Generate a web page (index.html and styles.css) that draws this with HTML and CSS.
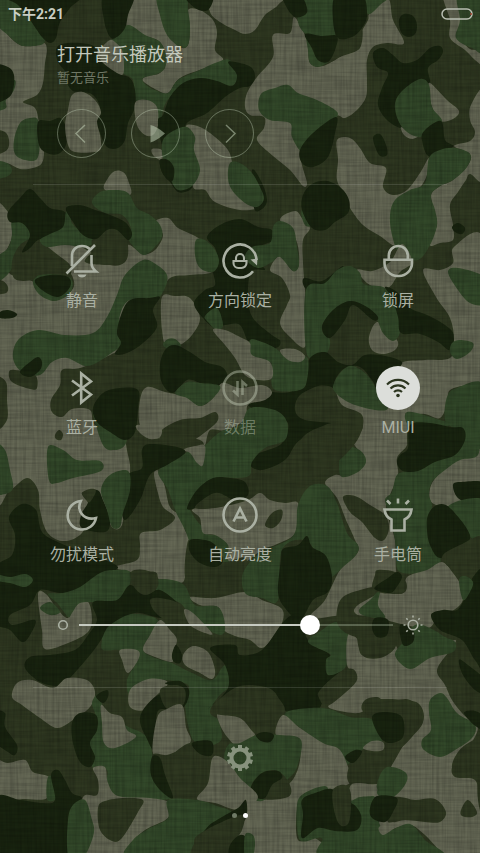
FILE: index.html
```
<!DOCTYPE html>
<html lang="zh-CN">
<head>
    <meta charset="UTF-8">
    <meta name="viewport" content="width=device-width, initial-scale=1.0">
    <title>控制中心</title>
    <link rel="stylesheet" href="styles.css">
</head>
<body>

<!-- Camouflage wallpaper, blobs are added by camo.js -->
<svg class="wallpaper" viewBox="0 0 480 853" preserveAspectRatio="xMidYMid slice" aria-hidden="true">
    <defs>
        <filter id="warp" x="0" y="0" width="100%" height="100%">
            <feTurbulence type="fractalNoise" baseFrequency="0.4 0.025" numOctaves="2" seed="3"/>
            <feColorMatrix values="0 0 0 0 0  0 0 0 0 0  0 0 0 0 0  0.3 0 0 0 -0.1"/>
        </filter>
        <filter id="weft" x="0" y="0" width="100%" height="100%">
            <feTurbulence type="fractalNoise" baseFrequency="0.025 0.4" numOctaves="2" seed="8"/>
            <feColorMatrix values="0 0 0 0 0  0 0 0 0 0  0 0 0 0 0  0.3 0 0 0 -0.1"/>
        </filter>
    </defs>
    <rect class="camo-o" width="480" height="853"/>
    <g id="camo"></g>
    <!-- Linen weave -->
    <rect width="480" height="853" filter="url(#warp)"/>
    <rect width="480" height="853" filter="url(#weft)"/>
</svg>

<header class="status-bar">
    <span class="time">下午2:21</span>
    <svg class="battery" width="32" height="12" viewBox="0 0 32 12" aria-label="电量">
        <rect x="1" y="1" width="30" height="10" rx="5"/>
        <path d="M30 5v2" class="battery-low"/>
    </svg>
</header>

<main class="panel">
    <section class="music">
        <h1>打开音乐播放器</h1>
        <p>暂无音乐</p>
        <div class="player">
            <button aria-label="上一首"><svg viewBox="0 0 49 49"><path d="M28 16l-9 8.500 9 9"/></svg></button>
            <button aria-label="播放"><svg viewBox="0 0 49 49"><path class="solid" d="M19.500 16q6 1 14.500 8.500q-8 7-14.500 9z"/></svg></button>
            <button aria-label="下一首"><svg viewBox="0 0 49 49"><path d="M21 16l9 8.500-9 9"/></svg></button>
        </div>
    </section>

    <section class="toggles">
        <button class="toggle">
            <svg viewBox="0 0 44 44">
                <path d="M12 27V17C12 11 16 7 22 7C25 7 27.500 8 29.500 9.800M31.500 16V24C31.500 27 33 30 36 32.500H14M6.500 34.500L35 6"/>
                <path class="solid" d="M17.500 35.500h9q-1 3-4.500 3t-4.500-3z"/>
            </svg>
            <span>静音</span>
        </button>
        <button class="toggle">
            <svg viewBox="0 0 44 44">
                <path d="M35 32.200A16.500 16.500 0 1 1 38.500 21"/>
                <path class="solid" d="M32.500 20.500l7-1-.5 7z"/>
                <path class="thin" d="M18 22v-3a4 4 0 0 1 8 0v3M15.500 22h13v2a5 5 0 0 1-5 5h-3a5 5 0 0 1-5-5z"/>
            </svg>
            <span>方向锁定</span>
        </button>
        <button class="toggle">
            <svg viewBox="0 0 44 44"><path d="M12.800 20.500V16.500a9.500 9.500 0 0 1 19 0V20.500M8.500 20.800H36V24a13 13 0 0 1-13 13h-1.500a13 13 0 0 1-13-13z"/></svg>
            <span>锁屏</span>
        </button>

        <button class="toggle">
            <svg viewBox="0 0 44 44"><path d="M12 14.500L31 28.500L21.200 36.500V7.500L31 15.500L12 29.500"/></svg>
            <span>蓝牙</span>
        </button>
        <button class="toggle off">
            <svg viewBox="0 0 44 44">
                <circle cx="22" cy="22" r="16.500"/>
                <path d="M19.500 15V28.500l-4.500-4M24.500 29V16l4.500 4"/>
            </svg>
            <span>数据</span>
        </button>
        <button class="toggle on" aria-pressed="true">
            <svg viewBox="0 0 44 44">
                <path class="thin" d="M11 18.500a15.500 15.500 0 0 1 22 0M14.500 22.500a10.600 10.600 0 0 1 15 0M18 26a5.700 5.700 0 0 1 8 0"/>
                <circle class="solid" cx="22" cy="29.500" r="1.800"/>
            </svg>
            <span>MIUI</span>
        </button>

        <button class="toggle">
            <svg viewBox="0 0 44 44"><path d="M20.800 8A14.300 14.300 0 1 0 36 25C24 28 16 18 20.800 8z"/></svg>
            <span>勿扰模式</span>
        </button>
        <button class="toggle">
            <svg viewBox="0 0 44 44">
                <circle cx="22" cy="22" r="16.500"/>
                <path d="M15.500 28.500L22 15.500L28.500 28.500M18 24.500h8"/>
            </svg>
            <span>自动亮度</span>
        </button>
        <button class="toggle">
            <svg viewBox="0 0 44 44">
                <path d="M8.500 16.500H35.500Q34.500 24 28.500 26.500V37.500H15.500V26.500Q9.500 24 8.500 16.500z"/>
                <path d="M22 5.500v5M11 7.500l3.500 3.500M33 7.500l-3.500 3.500"/>
            </svg>
            <span>手电筒</span>
        </button>
    </section>

    <section class="brightness">
        <svg width="12" height="12" viewBox="0 0 12 12"><circle cx="6" cy="6" r="4.300"/></svg>
        <input type="range" min="0" max="100" value="75" aria-label="亮度">
        <svg width="20" height="20" viewBox="0 0 20 20">
            <circle cx="10" cy="10" r="4.800"/>
            <path d="M10 .5v2M10 17.500v2M.5 10h2M17.500 10h2M3.300 3.300l1.400 1.400M15.300 15.300l1.400 1.400M3.300 16.700l1.400-1.400M15.300 4.700l1.400-1.400"/>
        </svg>
    </section>

    <footer class="footer">
        <button class="settings" aria-label="设置">
            <svg width="28" height="28" viewBox="-14 -14 28 28">
                <circle r="8.500"/>
                <path id="teeth" d=""/>
            </svg>
        </button>
        <div class="pages"><i></i><i class="current"></i></div>
    </footer>
</main>

<script src="camo.js"></script>
</body>
</html>
```

FILE: styles.css
```
* {
    box-sizing: border-box;
}

body {
    margin: 0;
    min-height: 100vh;
    position: relative;
    overflow-x: hidden;
    background: #2b331d;
    color: #aab0a3;
    font-family: Roboto, "Noto Sans CJK SC", sans-serif;
}

button {
    padding: 0;
    border: 0;
    background: none;
    color: inherit;
    font: inherit;
    cursor: pointer;
}

svg {
    display: block;
    fill: none;
    stroke: currentColor;
}

.solid {
    fill: currentColor;
    stroke: none;
}

/* Wallpaper */
.wallpaper {
    position: absolute;
    inset: 0;
    width: 100%;
    height: 100%;
    z-index: -1;
    stroke: none;
}

.camo-o { fill: #2e3720; }
.camo-t { fill: #646754; }
.camo-g { fill: #324829; }
.camo-d { fill: #18230f; }

/* Status bar */
.status-bar {
    display: flex;
    justify-content: space-between;
    align-items: center;
    height: 27px;
    padding: 0 7px 0 8px;
}

.time {
    font-size: 14px;
    line-height: 20px;
    font-weight: bold;
    color: #c9cec3;
}

.battery {
    color: #b9beb2;
    stroke-width: 1.5;
}

.battery-low {
    stroke: #a5402c;
}

/* Music */
.music {
    margin: 0 33px;
    padding: 15px 24px 26px;
    border-bottom: 1px solid rgba(255, 255, 255, 0.12);
}

.music h1 {
    margin: 0;
    font-size: 18px;
    line-height: 26px;
    font-weight: normal;
    color: #c3c8bc;
}

.music p {
    margin: 0;
    font-size: 13px;
    line-height: 20px;
    color: #6f7765;
}

.player {
    display: flex;
    gap: 25px;
    margin-top: 21px;
}

.player button {
    width: 49px;
    height: 49px;
    border: 1px solid rgba(200, 215, 190, 0.4);
    border-radius: 50%;
    color: rgba(200, 215, 190, 0.5);
}

.player svg {
    width: 49px;
    margin: -1px;
    stroke-width: 1.5;
}

/* Toggles */
.toggles {
    display: grid;
    grid-template-columns: repeat(3, 1fr);
    row-gap: 53px;
    padding: 54px 3px 0;
}

.toggle {
    display: flex;
    flex-direction: column;
    align-items: center;
    gap: 6px;
    font-size: 16px;
    line-height: 24px;
}

.toggle svg {
    width: 44px;
    height: 44px;
    stroke-width: 2.6;
}

.toggle .thin {
    stroke-width: 2.1;
}

.toggle.off {
    color: rgba(190, 200, 180, 0.45);
}

.toggle.on svg {
    border-radius: 50%;
    background: #dcdeda;
    color: #2c351f;
}

/* Brightness slider */
.brightness {
    display: flex;
    align-items: center;
    gap: 10px;
    margin: 48px 57px 0;
}

.brightness svg {
    flex: none;
    stroke-width: 1.6;
}

.brightness input {
    flex: 1;
    min-width: 0;
    height: 20px;
    margin: 0;
    appearance: none;
    background: linear-gradient(90deg, #c6cac1 75%, rgba(200, 215, 190, 0.3) 75%) center / 100% 2px no-repeat;
}

.brightness input::-webkit-slider-thumb {
    appearance: none;
    width: 20px;
    height: 20px;
    border-radius: 50%;
    background: #fff;
}

/* Footer */
.footer {
    display: flex;
    flex-direction: column;
    align-items: center;
    margin: 52px 33px 0;
    padding: 56px 0 34px;
    border-top: 1px solid rgba(255, 255, 255, 0.12);
}

.settings {
    color: #87927d;
}

.settings svg {
    stroke-width: 4;
}

.pages {
    display: flex;
    gap: 6px;
    margin-top: 41px;
}

.pages i {
    width: 5px;
    height: 5px;
    border-radius: 50%;
    background: #6f7a66;
}

.pages .current {
    background: #fff;
}
```

FILE: camo.js
```
// One blob per line: colour key (t = tan, g = green, d = dark, o = olive), then its outline
const blobs = `
t -5,18 8,35 20,45 33,46 44,43 47,50 45,63 43,83 37,95 23,102 35,108 39,123 41,140 44,150 42,163 33,168 20,169 7,163 -5,163
g -5,3 20,-5 40,8 45,30 44,43 33,46 20,45 8,35 -5,22
d 0,-8 80,-8 70,8 60,22 56,38 50,43 42,37 30,20 18,5
g -5,95 14,80 14,90 6,100 6,108 -5,110
d -5,67 8,67 14,75 13,90 8,98 -5,100
o -5,132 5,132 9,140 7,150 -5,153
g 20,123 30,118 38,120 40,140 37,159 25,160 15,154 14,140
d 38,122 50,121 60,118 66,128 66,145 58,154 47,153 39,145
g -5,162 7,163 12,170 8,176 -5,178
t 132,-5 155,-5 160,13 167,33 180,47 188,45 190,27 188,10 200,10 213,20 217,33 215,50 223,60 205,68 180,78 168,93 157,90 143,81 147,76 160,73 166,60 160,42 145,36 128,28 127,15
g 158,-5 185,-5 188,10 190,27 188,45 180,47 167,35 160,15
g 115,37 128,25 145,35 160,42 166,55 165,68 157,74 143,78 145,84 155,90 168,93 178,80 200,70 215,63 230,60 238,78 236,85 215,85 205,80 185,85 170,97 163,110 160,128 150,105 135,100 133,80 122,72 118,55 107,45
t 103,46 110,40 115,42 122,50 124,65 122,75 110,70 102,62 95,55
d 104,-5 133,-5 128,15 125,28 117,37 110,37 104,20
t 213,-5 280,-5 278,5 265,15 255,30 245,34 235,30 220,22 210,12
d 185,-5 212,-5 208,10 195,8
d 62,44 80,43 95,47 100,60 117,73 130,78 135,90 135,107 128,123 125,140 118,148 107,147 100,133 97,120 100,107 93,95 83,92 73,91 67,83 66,73 58,62 56,50
t 72,95 83,92 95,100 101,112 97,122 100,135 101,148 95,152 75,152 68,145 65,125 68,110
t 135,103 147,100 157,107 158,125 153,135 145,135 137,125
t 152,149 162,150 165,158 160,160 153,155
t 186,126 200,127 215,137 228,150 233,165 240,190 255,200 262,207 240,210 215,202 205,190 193,187 195,160 192,145
d 163,115 170,97 183,83 200,78 217,81 232,86 237,75 228,62 240,63 252,68 255,78 250,86 240,88 225,97 207,113 188,122 182,133 167,150 160,138 158,120
d 160,160 168,160 174,168 178,185 192,186 188,191 178,192 170,182 162,172
g 163,140 175,130 187,127 195,137 194,150 200,170 192,186 178,190 170,178 163,160
d 160,160 168,160 174,168 173,180 168,180 162,172
d 252,170 262,183 267,200 262,209 254,208
g 230,163 240,163 252,173 260,187 264,199 257,207 245,203 232,190 228,178
t 105,190 108,178 115,171 123,172 128,180 130,195
t 294,17 303,31 308,45 310,63 323,66 340,57 357,50 360,35 368,20 370,13 388,-1 393,20 404,43 387,43 373,47 367,60 367,80 366,97 357,110 345,118 335,116 310,130 300,148 302,165 307,183 303,186 290,170 273,156 257,140 264,128 264,117 250,115 245,107 247,93 257,77 273,57 273,35 290,33
g 298,22 300,-5 335,-5 335,35 318,38 307,35
g 307,38 318,60 328,62 318,67 310,63 308,50
d 283,-5 300,-5 307,8 305,15 295,17 287,8
g 362,-5 390,-5 380,5 368,14
o 335,37 352,37 362,28 360,48 345,54 328,62
d 336,-5 362,-5 367,15 362,28 352,37 338,38 333,20
d 305,34 322,36 337,36 335,50 328,62 318,60 312,48
g 261,94 275,88 288,85 298,93 317,100 335,110 337,117 325,130 313,145 302,152 292,137 290,123 270,120 259,110
d 336,117 335,133 328,157 313,167 302,163 300,150 313,133
d 399,20 404,14 413,16 417,25 415,34 408,37 401,32
d 373,53 383,48 393,55 403,63 417,60 430,48 440,46 443,52 438,60 428,68 430,83 420,82 405,92 396,105 398,118 401,128 387,120 378,105 382,88 388,73 377,67
t 430,83 447,100 459,111 453,119 440,121 432,107 429,93
t 401,127 410,132 419,135 412,139 404,135
g 420,79 429,85 432,107 442,121 430,130 420,137 407,132 398,120 395,103 403,90
d 425,130 441,121 445,140 453,147 430,157 422,140
d 373,138 380,134 386,145 387,155 379,155
t 337,140 350,138 360,148 370,163 386,168 383,187 393,195 407,190 420,173 429,158 427,175 418,190 400,205 392,222 395,245 380,236 363,225 350,208 345,195 337,180 338,160
t 443,-5 458,-5 461,20 460,35 470,49 485,50 485,66 475,60 465,50 450,38 450,20
t 485,92 471,105 470,120 475,132 470,141 454,146 470,154 468,165 453,180 440,186 431,195 434,210 437,225 430,245 440,243 453,240 453,225 450,205 458,192 466,180 470,174 485,177
g 458,-5 485,-5 485,50 472,48 456,38 460,20
g 429,158 440,150 455,148 470,154 467,167 453,180 440,186 431,195 435,210 437,225 430,245 418,260 400,255 392,235 390,215 395,200 410,190 425,183
d 452,227 458,223 465,228 462,234 455,232
t -5,205 8,212 12,225 10,243 -5,262
t -5,280 12,275 25,278 38,285 55,300 72,290 73,278 62,262 45,260 38,252 50,245 70,242 90,252 110,265 125,262 128,245 143,254 155,250 163,235 155,222 168,218 178,228 195,236 207,245 216,258 212,272 190,275 170,278 160,295 140,310 125,345 110,355 80,368 62,370 60,385 51,400 52,412 62,417 72,409 90,410 95,425 120,430 128,455 130,472 125,500 122,525 113,528 100,510 80,535 62,541 47,532 40,510 38,490 27,478 10,490 -5,490
g 12,222 24,224 31,233 27,243 17,253 12,268 5,277 -5,282 -5,260 8,248 12,235
o 12,262 20,245 35,238 45,245 58,255 70,265 70,275 57,275 35,280 15,279
d 8,212 20,198 30,189 40,198 50,208 65,212 66,224 52,236 38,240 30,248 22,252 30,235 22,223 10,222
g 92,203 100,192 115,190 128,193 137,208 150,215 160,225 162,237 152,250 143,255 133,246 128,238 131,228 122,215 105,213
g 40,240 50,234 63,227 66,212 71,212 72,223 83,233 96,240 85,247 65,245 47,247
o 92,240 105,230 120,228 127,240 128,255 123,263 107,265 85,262 93,250
d 66,208 80,205 95,210 110,215 125,222 132,233 128,240 117,230 107,230 96,239 83,235 73,222
g 33,283 40,275 60,275 72,280 70,293 55,301 40,295
d 35,280 50,275 68,277 70,287 58,297 42,290
o -5,281 3,281 8,287 6,293 -5,293
d 0,312 8,310 17,314 12,318 0,318
g 143,260 157,265 167,275 165,288 155,300 130,300 120,315 120,335 122,345 110,354 98,362 85,366 67,358 52,362 40,375 22,372 13,358 18,340 38,330 65,335 93,333 107,317 117,295 125,275
o 9,372 15,370 35,375 37,388 30,389 12,382
d 20,372 30,362 38,357 42,362 40,370 30,377
o -5,380 6,382 7,400 7,420 -5,428
d 130,300 150,298 160,297 153,310 157,327 143,343 127,353 115,354 121,343 117,333 121,315
t 162,297 175,296 190,298 200,318 192,335 180,345 167,348 162,330
d 207,237 220,225 240,219 258,227 272,230 274,240 260,247 258,262 265,270 255,280 252,295 256,315 275,330 280,345 265,350 250,345 240,325 225,325 215,328 203,318 194,303 205,290 215,285 213,270 218,262 215,248
o 250,274 265,270 280,272 290,295 282,315 285,340 268,332 250,312
g 196,240 205,240 215,250 219,262 213,272 200,268 195,255
g 205,316 217,308 223,325 217,330 208,322
t 280,220 295,211 302,218 310,228 303,240 303,263 305,290 307,317 305,347 290,337 280,323 287,305 290,295 282,278 270,270 280,256 293,271 299,263 296,240
g 273,227 280,221 293,228 297,247 299,265 293,271 280,257 272,262 258,268 245,258 252,247 270,243
g 302,210 310,215 312,225 306,226 302,218
d 302,210 303,195 312,184 327,181 341,188 349,200 348,213 335,222 325,230 312,228
t 357,270 372,271 390,262 402,244 412,262 400,272 388,288 370,285
d 304,278 322,281 343,266 335,282 315,289 305,288
t 377,322 369,337 372,350 383,354 395,350 398,342 390,333
g 306,290 325,283 337,270 350,266 360,273 364,284 383,287 393,297 400,320 400,333 393,341 383,333 376,318 363,307 350,301 335,310 323,323 323,333 330,340 327,353 315,358 306,350
d 350,301 333,310 322,327 330,338 345,320 353,305 373,320 378,317 367,307
d 385,287 397,292 410,308 427,315 445,325 454,335 450,350 438,342 420,334 401,333 398,317 392,298
t 423,270 440,270 453,263 454,247 485,242 485,387 470,385 450,390 448,402 440,418 425,414 405,413 393,400 400,370 403,362 425,360 450,358 454,340 450,318 436,297
t 335,390 350,400 370,408 390,405 405,412 407,440 406,447 397,458 398,475 390,495 386,510 395,540 396,570 400,600 390,615 345,615 310,618 325,600 340,570 358,552 355,540 346,520 337,498 325,483 335,475 345,475 358,465 364,458 352,440 362,430 360,420 340,410
g 448,272 458,268 485,278 485,303 470,303 458,290
g 452,343 460,340 473,343 470,352 457,359 450,352
g 447,397 457,388 485,386 485,452 470,450 455,430 445,420
t 485,453 467,453 447,467 432,483 430,500 440,506 455,505 485,500
g 466,430 478,430 478,455 460,460 445,470 432,482 429,495 432,505 430,520 430,540 440,555 438,567 420,573 400,572 396,560 395,540 390,515 385,500 392,492 397,475 410,470 430,460 450,450 460,440
g 405,415 412,412 440,420 450,425 420,435 408,425
d 410,425 430,423 450,427 463,428 465,440 455,455 435,462 418,471 403,471 397,463 400,455 408,448
g 342,448 352,447 362,452 366,462 358,472 342,477 339,465
d 310,358 325,352 338,362 352,365 365,355 385,356 402,362 395,370 385,375 378,390 372,380 360,367 345,368 335,380 334,392 320,387 300,395 295,410 305,420 340,425 350,440 330,432 300,440 285,460 262,470 250,465 255,455 280,445 288,430 285,420 265,415 248,405 250,395 270,392 290,392 305,380
o 298,400 315,387 333,388 342,405 362,415 360,435 345,455 320,475 300,490 280,502 262,496 252,484 255,474 275,468 290,455 305,435 325,425 340,420 315,415
g 334,383 343,370 353,366 367,375 377,390 388,408 375,410 350,403 335,392
g 250,340 262,342 275,348 290,358 307,357 307,380 300,390 275,390 271,375 270,362 250,357
t 280,350 295,349 305,356 300,362 288,360
t 213,330 225,330 240,337 250,343 252,355 270,362 272,378 258,380 245,375 235,358 225,345
g 163,345 168,339 175,339 181,346 172,351
d 160,365 165,350 175,345 190,352 205,362 222,367 227,378 213,388 200,383 187,380 173,393 162,383
t 140,400 147,387 165,392 187,397 200,406 213,398 222,383 240,388 262,385 272,392 265,400 248,405 245,420 225,430 210,430 205,445 200,440 175,435 155,438 140,425
g 175,393 187,382 200,383 220,386 213,398 200,406 187,398
o 160,432 180,420 200,418 215,412 218,420 208,430 185,445 165,445
g 92,410 100,425 125,432 125,445 115,450 103,445
d 93,408 103,393 120,388 138,390 138,408 135,432 125,440 110,432 97,422
t 137,425 160,428 160,437 150,439 140,433
t 154,473 160,472 165,487 170,507 182,517 185,530 190,540 187,557 185,577 180,583 160,580 155,572 133,572 115,567 137,560 140,547 141,533 160,530 175,518 163,507 158,493
g 185,453 195,450 203,447 220,432 240,425 250,408 275,410 287,422 285,440 265,448 252,462 250,475 238,478 215,478 200,488 190,505 193,515 203,528 210,535 225,532 230,545 232,560 245,562 215,562 195,552 185,530 175,510 168,490 158,472 170,463
t 182,450 195,446 205,446 203,465 197,463 190,453
t 193,509 225,506 248,500 260,493 270,500 285,503 298,503 298,525 293,536 275,545 262,550 240,565 228,560 228,545 215,535 203,533 200,518
d 187,508 197,490 213,478 230,478 245,482 248,495 235,500 218,493 205,500 195,508
o 195,508 205,498 218,493 230,503 215,508
o 265,525 272,513 282,510 281,520 273,528
d 142,450 150,444 177,447 185,453 167,465 150,475 140,500 125,520 121,500 128,475 142,468
o 187,545 192,540 210,547 222,562 245,558 246,575 238,595 215,597 195,592 185,577
d 190,540 205,540 215,545 223,560 215,567 200,563 190,552
g 48,447 63,450 77,460 100,461 101,471 73,478 57,483 49,480
o 55,435 59,430 63,434 61,440 56,439
g -5,446 5,450 10,470 13,488 5,494 -5,490
d 82,493 97,490 103,500 110,520 105,532 82,528 81,515 88,502
o 82,493 90,489 96,491 90,502 86,500
g 101,490 110,475 128,471 130,490 123,513 120,527 112,527 107,510
d -5,570 12,555 15,535 9,517 22,504 36,510 42,532 60,543 85,553 118,567 95,577 83,592 60,593 40,590 30,605 10,615 12,625 35,620 30,635 22,642 10,630 -5,620
g -5,574 10,577 25,574 33,580 25,587 10,583 -5,580
t 38,594 46,594 58,610 68,618 72,605 87,601 92,617 88,632 68,643 45,649 42,630
g 63,593 80,587 100,573 115,570 130,572 128,590 117,602 97,602 80,603 72,613 68,617 58,604 48,594
g 40,608 50,602 60,612 50,615
t 190,597 215,598 245,592 262,600 281,608 283,620 275,635 262,648 250,640 235,636 222,628 219,608 200,605
g 157,580 183,584 195,605 218,607 225,625 220,635 195,622 180,603 160,597
g 298,505 310,486 327,486 337,503 347,533 358,545 356,555 343,567 330,577 320,560 305,540 282,550 278,600 262,598 245,593 243,573 260,553 293,536
g 102,640 105,625 130,614 158,620 150,635 143,650 155,658 172,663 190,672 212,680 225,665 243,668 240,680 220,695 210,712 218,720 222,738 212,745 195,742 188,725 185,700 188,685 165,680 145,682 130,695 127,680 135,665 138,655 120,650 103,650
d 93,602 117,600 130,585 145,595 160,590 180,605 188,617 160,618 135,613 110,625 101,640 90,655 68,680 58,686 40,682 25,668 30,657 50,655 75,650 88,635 97,620
o 131,572 145,570 157,577 157,588 145,595 134,587
o 150,600 160,598 180,604 196,622 212,633 220,648 200,655 180,640 170,625 155,612
t 184,610 193,613 212,633 205,633 190,625
d 283,549 298,545 307,536 312,547 326,556 332,577 328,592 313,600 300,620 285,608 278,592 281,560
d 240,655 262,650 285,620 300,615 308,640 330,655 327,668 340,672 325,685 323,700 315,712 290,713 275,700 268,688 240,686 218,700 209,708 228,688 225,665 210,648 235,645
g 322,630 335,622 348,625 350,648 345,668 328,675 326,660 330,654 308,642
t 160,620 170,630 177,640 172,655 172,662 155,657 143,650 150,635
t 120,650 137,650 139,658 128,673 122,660
t 183,655 193,646 208,652 215,670 212,679 200,673 185,665
d 172,655 176,645 182,655 180,663 174,662
t 12,697 17,683 32,680 53,688 67,678 87,680 95,692 90,707 73,720 57,728 40,718 22,705
g 92,703 100,693 104,708 125,725 145,735 152,752 152,775 172,798 118,798 107,785 107,770 93,768 89,745 97,722
d 72,723 80,713 96,715 97,730 90,743 95,757 90,767 80,762 73,743
d 96,696 107,690 108,697 103,703
t 101,705 110,713 122,717 127,730 136,737 115,748 104,743 102,723
t 130,690 145,680 160,679 168,684 155,697 145,710 130,707
d 155,697 163,695 167,708 157,713 155,750 146,737 140,722 143,710
d 165,683 180,681 189,690 187,702 182,708 184,695 175,687
o 160,690 175,685 185,690 183,705 167,709
t 157,718 167,709 182,705 186,727 190,743 167,755 153,753
o 153,755 170,755 190,743 212,750 215,768 207,783 197,798 175,799 158,780
d 152,757 160,758 165,775 173,798 160,790 151,775
d 192,743 211,741 212,755 200,754
t 218,713 235,714 253,730 253,738 240,748 228,738 220,725
o 215,712 240,690 268,688 280,700 285,712 275,730 262,738 253,732 240,718
t 348,635 358,640 362,655 385,655 395,645 408,668 430,650 455,640 450,650 437,670 445,685 452,700 462,713 470,720 478,728 470,745 453,765 455,777 475,780 478,800 485,858 450,858 425,835 410,825 390,830 378,835 375,820 360,800 352,785 380,783 392,765 405,743 423,722 420,705 405,700 370,700 362,712 345,712 328,706 345,692 357,677 347,665
g 285,713 323,708 350,717 373,720 383,740 362,752 345,765 337,748 323,746 303,730
t 276,735 283,715 300,728 323,743 340,750 350,773 350,783 333,789 305,793 297,810 298,840 315,838 328,858 240,858 246,805 262,800 290,783 300,760 297,738
g 228,745 240,743 257,735 280,735 301,740 297,767 287,780 262,801 245,790 225,765
d 256,735 265,732 274,735 270,742 261,741
o 251,787 262,773 278,771 290,785 288,797 262,799
d 251,787 262,773 278,771 282,778 272,785 265,798 256,797
t 213,757 228,762 240,778 258,797 240,810 215,803 197,799 208,783
o 320,690 340,672 353,669 357,680 345,693 327,706 319,698
o 358,632 375,630 395,633 395,648 380,658 362,655
t 377,603 382,593 403,593 407,577 427,570 442,562 453,573 463,590 460,605 437,620 427,628 397,623 383,617
o 337,610 343,597 360,590 375,587 380,592 358,605 355,613 370,620 390,625 398,640 375,640 350,635 338,625
g 359,610 370,600 380,590 378,605 385,618 365,616
o 375,575 378,570 395,572 406,582 405,592 393,594 373,590
d 376,586 388,578 397,572 402,577 396,588 390,593 376,590
o 343,497 355,496 370,505 385,515 389,528 384,540 375,538 362,522 350,512
d 453,485 460,482 485,483 485,505 470,504 457,497
g 448,507 485,500 485,538 470,537
d 428,515 437,505 450,508 470,535 460,548 440,558 430,545 427,530
o 442,558 460,545 485,537 485,575 463,576
d 473,577 485,575 485,665 475,660 462,640 440,630 431,615 443,610 457,610 465,598 470,590
g 459,580 465,576 473,582 470,592 463,600
g 395,655 405,640 415,625 430,628 445,637 455,642 453,652 430,658 410,669
d 375,618 388,620 387,635 377,637 372,628
d 400,625 413,630 413,642 403,645
d 459,660 468,665 485,680 485,693 475,690 463,675
g 430,700 440,693 447,698 457,713 475,725 472,738 455,750 440,757 424,750 422,740 431,730 429,713
d 464,713 475,711 485,718 485,730 474,725
o 452,767 458,752 470,742 485,738 485,758 473,765 462,776
o 362,710 365,700 377,697 387,702 410,700 423,720 412,737 393,757 380,780 352,785 348,770 362,750 382,743 375,720
t 363,748 372,741 383,742 383,750 372,751
d 372,717 385,712 402,717 403,737 390,743 380,737
d 345,757 355,750 362,752 353,763
g 378,795 378,780 387,767 405,772 406,783 393,797
g 297,805 305,793 325,786 332,795 352,798 375,797 380,825 390,830 410,824 425,840 440,858 325,858 322,838 300,840
t 352,784 375,786 375,795 360,797 350,800
d 302,800 315,793 333,790 336,815 350,803 361,815 357,830 335,831 318,828 302,838 303,815
o 333,790 345,785 351,795 349,822 340,825 334,810
o 388,800 400,797 415,800 435,799 446,812 440,822 425,822 405,820 388,822
d 370,808 377,796 397,798 393,812 385,822 372,818
t 379,827 393,822 395,827 383,835
o 461,810 468,800 477,812 472,817 462,816
t -5,762 8,763 25,760 33,772 50,778 47,798 25,799 -5,798
g 48,777 57,780 61,792 55,800 47,799
d 51,775 58,770 65,780 72,793 82,798 72,808 68,830 72,858 -5,858 -5,799 20,800 42,803 55,800
d -5,713 5,713 5,727 17,745 15,755 8,752 -5,740
t 82,800 97,795 98,780 93,768 105,767 108,783 118,796 150,798 170,803 168,818 145,830 130,845 125,858 85,858
g 68,820 73,805 85,800 92,820 94,832 88,850 80,860 68,855
o 98,808 105,801 125,798 143,800 138,812 122,838 112,841 100,830
g 168,800 197,800 217,806 232,813 215,825 195,838 190,858 127,858 133,840 150,828 168,818
d 205,830 222,817 238,808 246,800 245,820 225,835 230,858 195,858
o 200,835 222,822 243,815 242,830 232,845 228,858 192,858
d 230,845 240,835 247,840 245,858 230,858
g 245,835 253,835 255,845 252,858 245,858`;

// Closed Catmull-Rom spline through the points
function smooth(points) {
    const n = points.length;
    let d = `M${points[0]}`;
    for (let i = 0; i < n; i++) {
        const [a, b, c, e] = [-1, 0, 1, 2].map(k => points[(i + k + n) % n]);
        d += `C${b[0] + (c[0] - a[0]) / 6},${b[1] + (c[1] - a[1]) / 6} `
           + `${c[0] - (e[0] - b[0]) / 6},${c[1] - (e[1] - b[1]) / 6} ${c}`;
    }
    return d + 'Z';
}

const svgNS = 'http://www.w3.org/2000/svg';
const camo = document.getElementById('camo');

blobs.trim().split('\n').forEach(line => {
    const [key, ...pairs] = line.split(' ');
    const path = document.createElementNS(svgNS, 'path');
    path.setAttribute('class', 'camo-' + key);
    path.setAttribute('d', smooth(pairs.map(p => p.split(',').map(Number))));
    camo.appendChild(path);
});

// Gear teeth
let teeth = '';
for (let i = 0; i < 10; i++) {
    const a = (i + 0.5) * Math.PI / 5;
    teeth += `M${9 * Math.cos(a)} ${9 * Math.sin(a)}L${13 * Math.cos(a)} ${13 * Math.sin(a)}`;
}
document.getElementById('teeth').setAttribute('d', teeth);
```
